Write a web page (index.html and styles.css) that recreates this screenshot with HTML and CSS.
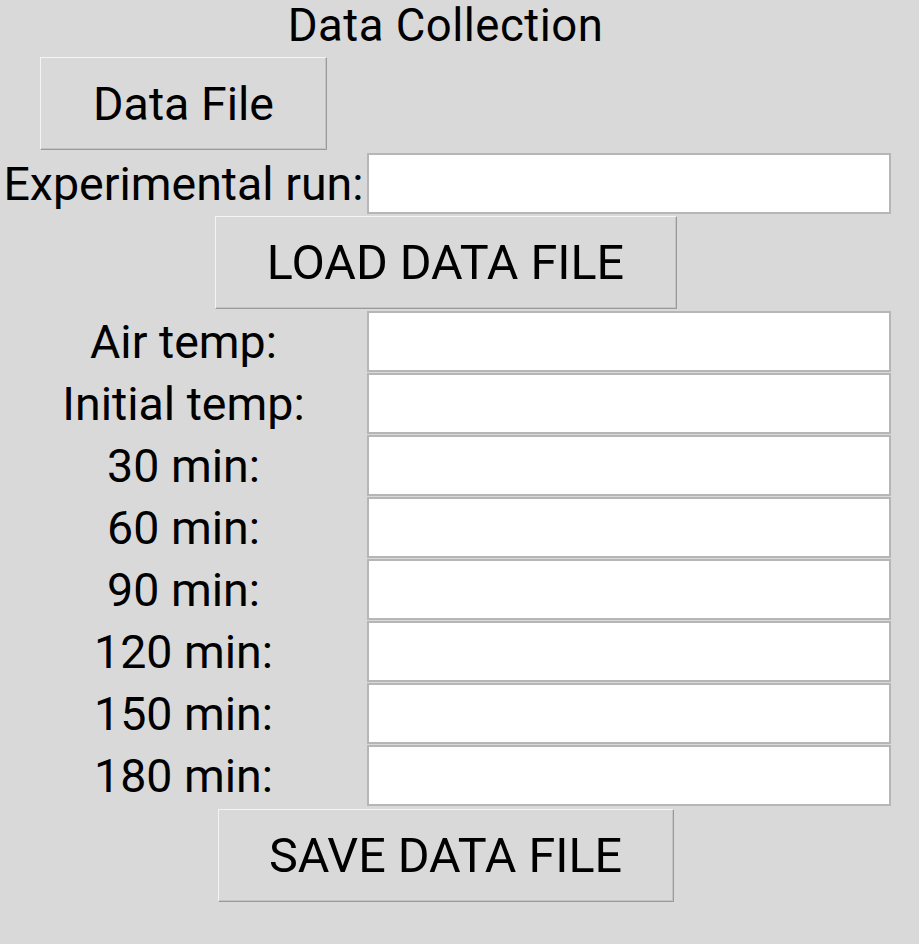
FILE: index.html
```html
<!DOCTYPE html>
<html>
<head>
<meta charset="utf-8">
<link rel="stylesheet" href="styles.css">
</head>
<body>
<div class="form">
  <div class="title">Data Collection</div>
  <div class="cell-left"><button class="btn btn-file">Data File</button></div>
  <div class="cell-right"></div>
  <div class="label label-exp">Experimental run:</div>
  <div class="entry-wrap entry-exp"><input class="entry" type="text"></div>
  <div class="span"><button class="btn btn-caps btn-load">LOAD DATA FILE</button></div>
  <div class="label">Air temp:</div><div class="entry-wrap"><input class="entry" type="text"></div>
  <div class="label">Initial temp:</div><div class="entry-wrap"><input class="entry" type="text"></div>
  <div class="label">30 min:</div><div class="entry-wrap"><input class="entry" type="text"></div>
  <div class="label">60 min:</div><div class="entry-wrap"><input class="entry" type="text"></div>
  <div class="label">90 min:</div><div class="entry-wrap"><input class="entry" type="text"></div>
  <div class="label">120 min:</div><div class="entry-wrap"><input class="entry" type="text"></div>
  <div class="label">150 min:</div><div class="entry-wrap"><input class="entry" type="text"></div>
  <div class="label">180 min:</div><div class="entry-wrap"><input class="entry" type="text"></div>
  <div class="span span-save"><button class="btn btn-caps btn-save">SAVE DATA FILE</button></div>
</div>
</body>
</html>
```
FILE: styles.css
```css
html, body {
  margin: 0;
  padding: 0;
  background: #d9d9d9;
}
body {
  width: 919px;
  height: 944px;
  font-family: Roboto, "Liberation Sans", sans-serif;
  color: #000;
}
.form {
  display: grid;
  grid-template-columns: 367px 524px;
  width: 891px;
}
.title {
  grid-column: 1 / 3;
  height: 57px;
  display: flex;
  align-items: center;
  justify-content: center;
  font-size: 45.5px;
  letter-spacing: 0.5px;
  padding-bottom: 6px;
  box-sizing: border-box;
}
.cell-left {
  display: flex;
  justify-content: center;
  height: 94px;
}
.span {
  grid-column: 1 / 3;
  display: flex;
  justify-content: center;
  height: 95px;
}
.span-save {
  padding-top: 2px;
}
.btn {
  font-family: Roboto, "Liberation Sans", sans-serif;
  font-size: 46.5px;
  color: #000;
  background: #d9d9d9;
  border: 1px solid;
  border-color: #f4f4f4 #9a9a9a #9a9a9a #f4f4f4;
  box-shadow: inset -1px -1px 0 #c4c4c4;
  margin: 0;
  padding: 0;
  height: 93px;
  box-sizing: border-box;
}
.btn-caps { font-size: 48.5px; }
.btn-file { width: 287px; }
.btn-load { width: 462px; }
.btn-save { width: 456px; }
.label {
  display: flex;
  align-items: center;
  justify-content: center;
  font-size: 46.5px;
  height: 62px;
  white-space: nowrap;
}
.label-exp {
  height: 65px;
}
.entry-wrap {
  height: 62px;
  display: flex;
  align-items: flex-start;
}
.entry-exp {
  height: 65px;
  padding-top: 2px;
  box-sizing: border-box;
}
.entry {
  width: 524px;
  height: 61px;
  box-sizing: border-box;
  border: 2px solid #b6b6b6;
  background: #fff;
  margin: 0;
  padding: 0 6px;
  font-family: Roboto, sans-serif;
  font-size: 40px;
  outline: none;
}
```
